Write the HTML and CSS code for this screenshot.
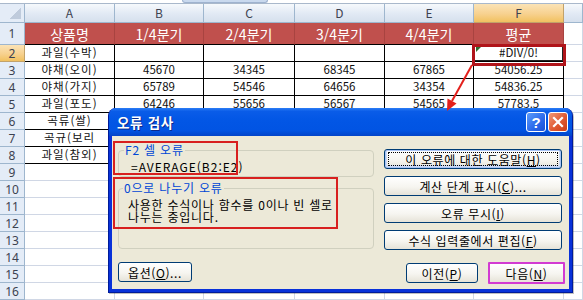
FILE: index.html
```html
<!DOCTYPE html>
<html lang="ko">
<head>
    <meta charset="utf-8">
    <title>오류 검사</title>
    <link rel="stylesheet" href="styles.css">
</head>
<body>
    <div class="screen">
        <div class="topbar"><span class="topbar-tab"></span></div>

        <div class="sheet">
            <!-- column headers -->
            <div class="ch corner"></div>
            <div class="ch">A</div>
            <div class="ch">B</div>
            <div class="ch">C</div>
            <div class="ch">D</div>
            <div class="ch">E</div>
            <div class="ch sel">F</div>
            <div class="ch"></div>

            <!-- row 1 -->
            <div class="rh">1</div>
            <div class="c t hd">상품명</div>
            <div class="c t hd">1/4분기</div>
            <div class="c t hd">2/4분기</div>
            <div class="c t hd">3/4분기</div>
            <div class="c t hd">4/4분기</div>
            <div class="c t hd">평균</div>
            <div class="c"></div>

            <!-- row 2 -->
            <div class="rh sel">2</div>
            <div class="c t name">과일(수박)</div>
            <div class="c t"></div>
            <div class="c t"></div>
            <div class="c t"></div>
            <div class="c t"></div>
            <div class="c t active">#DIV/0!</div>
            <div class="c"></div>

            <!-- row 3 -->
            <div class="rh">3</div>
            <div class="c t name">야채(오이)</div>
            <div class="c t">45670</div>
            <div class="c t">34345</div>
            <div class="c t">68345</div>
            <div class="c t">67865</div>
            <div class="c t">54056.25</div>
            <div class="c"></div>

            <!-- row 4 -->
            <div class="rh">4</div>
            <div class="c t name">야채(가지)</div>
            <div class="c t">65789</div>
            <div class="c t">54546</div>
            <div class="c t">64656</div>
            <div class="c t">34354</div>
            <div class="c t">54836.25</div>
            <div class="c"></div>

            <!-- row 5 -->
            <div class="rh">5</div>
            <div class="c t name">과일(포도)</div>
            <div class="c t">64246</div>
            <div class="c t">55656</div>
            <div class="c t">56567</div>
            <div class="c t">54565</div>
            <div class="c t">57783.5</div>
            <div class="c"></div>

            <!-- row 6 -->
            <div class="rh">6</div>
            <div class="c t name">곡류(쌀)</div>
            <div class="c t"></div>
            <div class="c t"></div>
            <div class="c t"></div>
            <div class="c t"></div>
            <div class="c t"></div>
            <div class="c"></div>

            <!-- row 7 -->
            <div class="rh">7</div>
            <div class="c t name">곡규(보리</div>
            <div class="c t"></div>
            <div class="c t"></div>
            <div class="c t"></div>
            <div class="c t"></div>
            <div class="c t"></div>
            <div class="c"></div>

            <!-- row 8 -->
            <div class="rh">8</div>
            <div class="c t name">과일(참외)</div>
            <div class="c t"></div>
            <div class="c t"></div>
            <div class="c t"></div>
            <div class="c t"></div>
            <div class="c t"></div>
            <div class="c"></div>

            <div class="rh">9</div><div class="c"></div><div class="c"></div><div class="c"></div><div class="c"></div><div class="c"></div><div class="c"></div><div class="c"></div>
            <div class="rh">10</div><div class="c"></div><div class="c"></div><div class="c"></div><div class="c"></div><div class="c"></div><div class="c"></div><div class="c"></div>
            <div class="rh">11</div><div class="c"></div><div class="c"></div><div class="c"></div><div class="c"></div><div class="c"></div><div class="c"></div><div class="c"></div>
            <div class="rh">12</div><div class="c"></div><div class="c"></div><div class="c"></div><div class="c"></div><div class="c"></div><div class="c"></div><div class="c"></div>
            <div class="rh">13</div><div class="c"></div><div class="c"></div><div class="c"></div><div class="c"></div><div class="c"></div><div class="c"></div><div class="c"></div>
            <div class="rh">14</div><div class="c"></div><div class="c"></div><div class="c"></div><div class="c"></div><div class="c"></div><div class="c"></div><div class="c"></div>
            <div class="rh">15</div><div class="c"></div><div class="c"></div><div class="c"></div><div class="c"></div><div class="c"></div><div class="c"></div><div class="c"></div>
            <div class="rh">16</div><div class="c"></div><div class="c"></div><div class="c"></div><div class="c"></div><div class="c"></div><div class="c"></div><div class="c"></div>
        </div>

        <!-- error checking dialog -->
        <div class="dlg">
            <div class="dlg-title">
                <span class="dlg-caption">오류 검사</span>
                <span class="tb-btn tb-help">?</span>
                <span class="tb-btn tb-close">
                    <svg width="14" height="14" viewBox="0 0 14 14">
                        <path d="M3 3 L11 11 M11 3 L3 11" stroke="#fff" stroke-width="2.2" stroke-linecap="square"/>
                    </svg>
                </span>
            </div>
            <div class="dlg-body">
                <div class="dlg-left">
                    <fieldset class="group group-cell">
                        <legend>F2 셀 오류</legend>
                        <div class="formula">=AVERAGE(B2:E2)</div>
                    </fieldset>
                    <fieldset class="group group-msg">
                        <legend>0으로 나누기 오류</legend>
                        <p class="msg">사용한 수식이나 함수를 0이나 빈 셀로<br>나누는 중입니다.</p>
                    </fieldset>
                </div>
                <div class="dlg-right">
                    <button class="btn btn-default"><span class="focus">이 오류에 대한 도움말(<u>H</u>)</span></button>
                    <button class="btn">계산 단계 표시(<u>C</u>)...</button>
                    <button class="btn">오류 무시(<u>I</u>)</button>
                    <button class="btn">수식 입력줄에서 편집(<u>F</u>)</button>
                </div>
                <div class="dlg-bottom">
                    <button class="btn btn-options">옵션(<u>O</u>)...</button>
                    <button class="btn btn-prev">이전(<u>P</u>)</button>
                    <button class="btn btn-next">다음(<u>N</u>)</button>
                </div>
            </div>
        </div>

        <!-- red annotations -->
        <div class="mark mark-f2"></div>
        <div class="mark mark-cell"></div>
        <div class="mark mark-msg"></div>
        <svg class="arrow" width="583" height="300" viewBox="0 0 583 300">
            <line x1="472" y1="65" x2="452" y2="101" stroke="#e3201c" stroke-width="2"/>
            <polygon points="447,111 456.5,103.5 447.5,98.5" fill="#e3201c"/>
        </svg>
    </div>
</body>
</html>
```

FILE: styles.css
```css
:root {
    --grid-line: #d0d7e5;
    --head-line: #9eb6ce;
    --head-bg: #e4ecf7;
    --accent-red: #c0504d;
    --xp-face: #ece9d8;
    --xp-blue: #0831d9;
    --xp-btn-border: #003c74;
    --mark-red: #d8201f;
}

* {
    box-sizing: border-box;
}

body {
    margin: 0;
    background: #fff;
}

.screen {
    position: relative;
    width: 583px;
    height: 300px;
    overflow: hidden;
    font-family: "Noto Sans CJK KR", "Noto Sans", sans-serif;
    color: #000;
}

.topbar {
    height: 4px;
    border-bottom: 1px solid #a9b8cb;
    padding-left: 182px;
}

.topbar-tab {
    display: block;
    width: 86px;
    height: 3px;
    background: #c9d9ee;
    border: 1px solid #9fb3cf;
    border-top: none;
    border-radius: 0 0 3px 3px;
}

/* spreadsheet */

.sheet {
    display: grid;
    grid-template-columns: 25px 90px 89px 91px 90px 89px 90px 19px;
    grid-template-rows: 19px 22px repeat(15, 17px);
}

.ch,
.rh,
.c {
    display: flex;
    align-items: center;
    justify-content: center;
    line-height: 1;
    white-space: nowrap;
    overflow: hidden;
}

.ch {
    background: linear-gradient(#f6f9fc, #e1e9f4 55%, #d6e0ed);
    border-right: 1px solid var(--head-line);
    border-bottom: 1px solid var(--head-line);
    color: #3c4250;
    font-size: 12px;
}

.ch.corner {
    background: linear-gradient(to bottom right, transparent 50%, #bfcbdc 50%) right 3px bottom 3px / 11px 11px no-repeat, var(--head-bg);
}

.rh {
    background: var(--head-bg);
    border-right: 1px solid var(--head-line);
    border-bottom: 1px solid var(--head-line);
    color: #3c4250;
    font-family: "Noto Sans", sans-serif;
    font-size: 12px;
    padding-top: 1px;
}

.ch.sel,
.rh.sel {
    background: linear-gradient(#fbe3b6, #f7d18f 55%, #f1c15f);
    border-color: #c2a26a;
}

.c {
    border-right: 1px solid var(--grid-line);
    border-bottom: 1px solid var(--grid-line);
    font-size: 11.5px;
    color: #111;
}

.c.t {
    border-right-color: #000;
    border-bottom-color: #000;
}

.c.hd {
    background: var(--accent-red);
    color: #fff;
    font-size: 14px;
    border-right-color: #a84340;
    border-bottom-color: #000;
}

.c.name {
    letter-spacing: 1px;
}

.c.active {
    position: relative;
    box-shadow: inset 0 0 0 1px #222;
}

.c.active::before {
    content: "";
    position: absolute;
    left: 2px;
    top: 2px;
    border-top: 5px solid #2f6e2f;
    border-right: 5px solid transparent;
}

/* dialog */

.dlg {
    position: absolute;
    left: 108px;
    top: 108px;
    width: 465px;
    height: 185px;
    display: flex;
    flex-direction: column;
    padding: 0 3px 3px;
    background: var(--xp-blue);
    border: 1px solid #001b9a;
    border-top: none;
    border-radius: 8px 8px 0 0;
    box-shadow: 1px 1px 0 rgba(0, 0, 0, 0.25);
}

.dlg-title {
    height: 28px;
    margin: 0 -3px;
    padding: 0 4px 0 8px;
    display: flex;
    align-items: center;
    gap: 2px;
    border-radius: 7px 7px 0 0;
    background: linear-gradient(#2b7df5, #0a5ce8 12%, #0256e5 45%, #0154e3 80%, #0344c8);
}

.dlg-caption {
    flex: 1;
    color: #fff;
    font-size: 13.5px;
    font-weight: 700;
    text-shadow: 1px 1px 0 #0b2a8c;
    letter-spacing: 0.7px;
}

.tb-btn {
    width: 20px;
    height: 20px;
    border: 1px solid #fff;
    border-radius: 3px;
    display: flex;
    align-items: center;
    justify-content: center;
    color: #fff;
}

.tb-help {
    background: linear-gradient(135deg, #5b9bfb, #2a68ea 60%, #1a4fd6);
    font-family: "Liberation Sans", sans-serif;
    font-size: 15px;
    font-weight: 700;
}

.tb-close {
    background: linear-gradient(135deg, #f09978, #e05a32 55%, #cb3d16);
}

.dlg-body {
    flex: 1;
    display: grid;
    grid-template-columns: 256px 178px;
    justify-content: space-between;
    align-content: start;
    padding: 7px 7px 0 6px;
    background: var(--xp-face);
    font-size: 12px;
    line-height: 14px;
}

.dlg-left {
    display: flex;
    flex-direction: column;
    gap: 4px;
}

.group {
    margin: 0;
    border: 1px solid #d0d0bf;
    border-radius: 4px;
    min-width: 0;
}

.group legend {
    padding: 0 1px;
    color: #0046d5;
    font-size: 12px;
    line-height: 14px;
    letter-spacing: 0.8px;
}

.group-cell {
    padding: 3px 8px 2px 12px;
}

.group-cell legend {
    margin-left: -7px;
}

.formula {
    letter-spacing: 1px;
    white-space: nowrap;
}

.group-msg {
    height: 68px;
    padding: 4px 4px 0 9px;
}

.group-msg legend {
    margin-left: -5px;
}

.msg {
    margin: 0;
    line-height: 11.5px;
    letter-spacing: 0.75px;
    white-space: nowrap;
}

.dlg-right {
    display: flex;
    flex-direction: column;
    gap: 7px;
    margin-top: 6px;
}

.btn {
    height: 20px;
    padding: 0;
    display: flex;
    align-items: center;
    justify-content: center;
    border: 1px solid var(--xp-btn-border);
    border-radius: 3px;
    background: linear-gradient(#ffffff, #f6f5f0 55%, #e6e3d8);
    font-family: "Noto Sans CJK KR", sans-serif;
    font-size: 12px;
    letter-spacing: 0.6px;
    color: #000;
}

.btn u {
    text-underline-offset: 1px;
}

.btn-default {
    box-shadow: inset 0 0 0 1px #a9c4f5, inset 0 -1px 0 2px #cfdcf5;
}

.btn-default .focus {
    display: flex;
    align-items: center;
    justify-content: center;
    width: calc(100% - 6px);
    height: 14px;
    border: 1px dotted #000;
}

.dlg-bottom {
    grid-column: 1 / -1;
    display: flex;
    gap: 10px;
    margin-top: 12px;
}

.btn-options {
    width: 74px;
    margin-right: auto;
}

.btn-prev {
    width: 72px;
    margin-top: 1px;
}

.btn-next {
    width: 77px;
    height: 22px;
    margin-right: -3px;
    border: 2px solid #d23bd2;
    border-radius: 1px;
}

/* annotations drawn over the screenshot */

.mark {
    position: absolute;
    border: 2px solid var(--mark-red);
}

.mark-f2 {
    left: 472px;
    top: 44px;
    width: 94px;
    height: 22px;
    border-color: #b0141a;
    border-width: 3px;
}

.mark-cell {
    left: 113px;
    top: 141px;
    width: 125px;
    height: 34px;
}

.mark-msg {
    left: 113px;
    top: 177px;
    width: 225px;
    height: 52px;
}

.arrow {
    position: absolute;
    left: 0;
    top: 0;
    pointer-events: none;
}
```
